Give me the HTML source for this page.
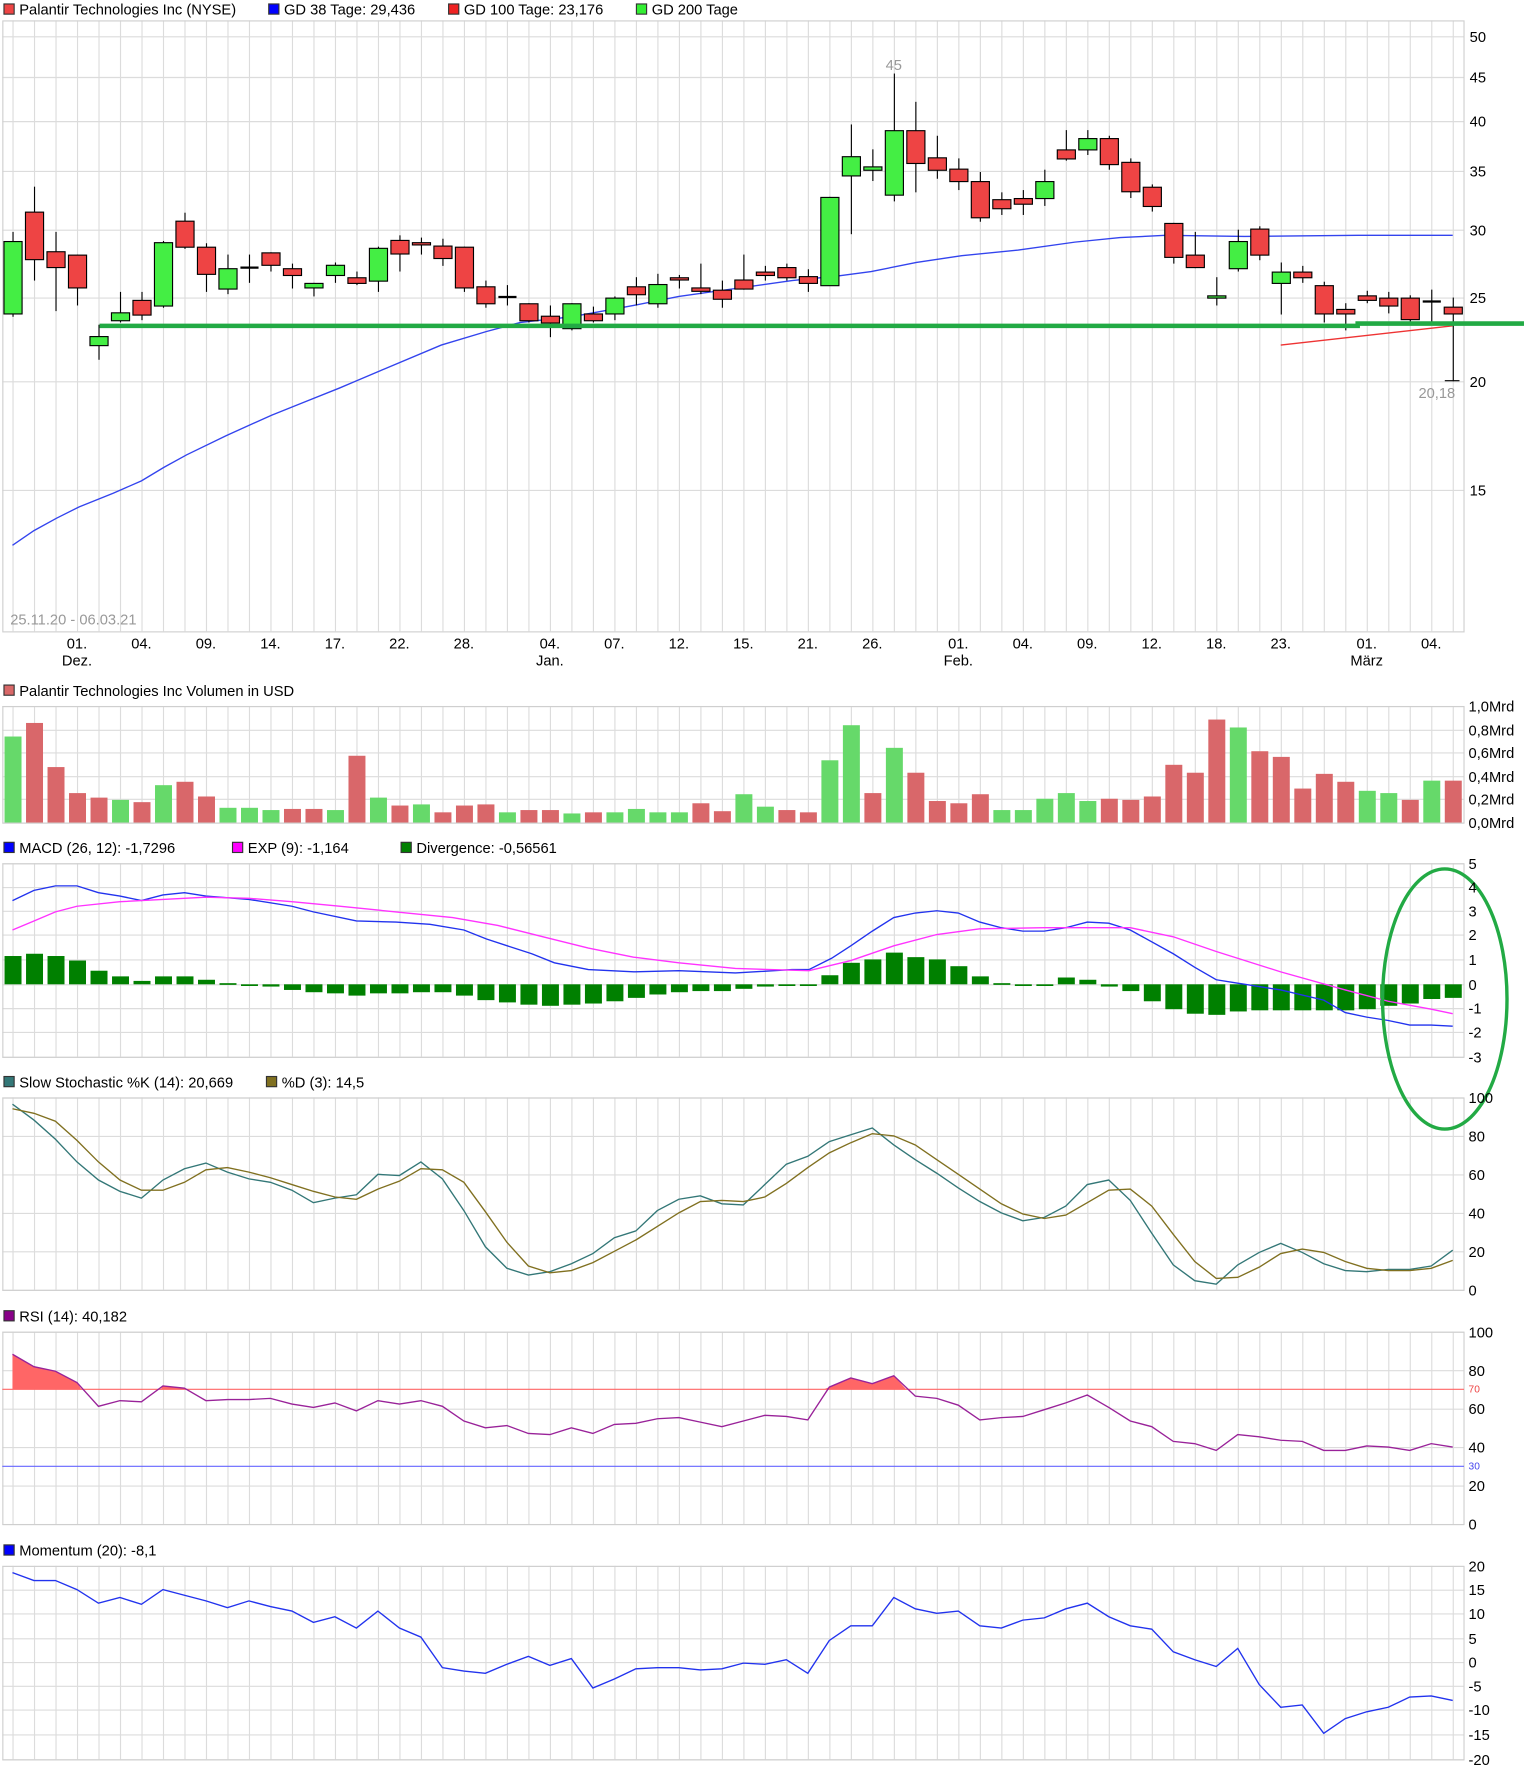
<!DOCTYPE html>
<html><head><meta charset="utf-8"><style>
html,body{margin:0;padding:0;background:#fff;}
svg{display:block;}
text{font-family:"Liberation Sans",Arial,sans-serif;font-size:13px;fill:#000;}
.g{fill:#999;}
</style></head><body>
<svg id="s" width="1524" height="1774" viewBox="0 0 1347 1568" xmlns="http://www.w3.org/2000/svg">
<rect width="1347" height="1568" fill="#fff"/>
<g id="grid" stroke="#dcdcdc" stroke-width="1"></g>
<g id="content"></g>
<!-- legends -->
<rect x="3.5" y="3.5" width="9" height="9" fill="#ee4444" stroke="#333"/><text x="17" y="13">Palantir Technologies Inc (NYSE)</text>
<rect x="237.5" y="3.5" width="9" height="9" fill="#0000ff" stroke="#333"/><text x="251" y="13">GD 38 Tage: 29,436</text>
<rect x="396.5" y="3.5" width="9" height="9" fill="#ee2222" stroke="#333"/><text x="410" y="13">GD 100 Tage: 23,176</text>
<rect x="562.5" y="3.5" width="9" height="9" fill="#33ee33" stroke="#333"/><text x="576" y="13">GD 200 Tage</text>
<rect x="3.5" y="605.5" width="9" height="9" fill="#d96868" stroke="#333"/><text x="17" y="615">Palantir Technologies Inc Volumen in USD</text>
<rect x="3.5" y="744.5" width="9" height="9" fill="#0000ff" stroke="#333"/><text x="17" y="754">MACD (26, 12): -1,7296</text>
<rect x="205.5" y="744.5" width="9" height="9" fill="#ff00ff" stroke="#333"/><text x="219" y="754">EXP (9): -1,164</text>
<rect x="354.5" y="744.5" width="9" height="9" fill="#008000" stroke="#333"/><text x="368" y="754">Divergence: -0,56561</text>
<rect x="3.5" y="951.5" width="9" height="9" fill="#337777" stroke="#333"/><text x="17" y="961">Slow Stochastic %K (14): 20,669</text>
<rect x="235.5" y="951.5" width="9" height="9" fill="#807020" stroke="#333"/><text x="249" y="961">%D (3): 14,5</text>
<rect x="3.5" y="1158.5" width="9" height="9" fill="#880088" stroke="#333"/><text x="17" y="1168">RSI (14): 40,182</text>
<rect x="3.5" y="1365.5" width="9" height="9" fill="#0000ff" stroke="#333"/><text x="17" y="1375">Momentum (20): -8,1</text>
<!-- price axis -->
<g>
<text x="1299" y="37">50</text><text x="1299" y="73">45</text><text x="1299" y="112">40</text><text x="1299" y="156">35</text><text x="1299" y="208">30</text><text x="1299" y="268">25</text><text x="1299" y="342">20</text><text x="1299" y="438">15</text>
<text x="790" y="62" class="g" text-anchor="middle">45</text>
<text x="1270" y="352" class="g" text-anchor="middle">20,18</text>
<text x="9" y="552" class="g">25.11.20 - 06.03.21</text>
</g>
<g text-anchor="middle">
<text x="68" y="573">01.</text><text x="68" y="588">Dez.</text>
<text x="125" y="573">04.</text><text x="182" y="573">09.</text><text x="239" y="573">14.</text><text x="296" y="573">17.</text><text x="353" y="573">22.</text><text x="410" y="573">28.</text>
<text x="486" y="573">04.</text><text x="486" y="588">Jan.</text>
<text x="543" y="573">07.</text><text x="600" y="573">12.</text><text x="657" y="573">15.</text><text x="714" y="573">21.</text><text x="771" y="573">26.</text>
<text x="847" y="573">01.</text><text x="847" y="588">Feb.</text>
<text x="904" y="573">04.</text><text x="961" y="573">09.</text><text x="1018" y="573">12.</text><text x="1075" y="573">18.</text><text x="1132" y="573">23.</text>
<text x="1208" y="573">01.</text><text x="1208" y="588">März</text>
<text x="1265" y="573">04.</text>
</g>
<g>
<text x="1298" y="629">1,0Mrd</text><text x="1298" y="650">0,8Mrd</text><text x="1298" y="670">0,6Mrd</text><text x="1298" y="691">0,4Mrd</text><text x="1298" y="711">0,2Mrd</text><text x="1298" y="732">0,0Mrd</text>
<text x="1298" y="768">5</text><text x="1298" y="789">4</text><text x="1298" y="810">3</text><text x="1298" y="831">2</text><text x="1298" y="853">1</text><text x="1298" y="875">0</text><text x="1298" y="896">-1</text><text x="1298" y="917">-2</text><text x="1298" y="939">-3</text>
<text x="1298" y="975">100</text><text x="1298" y="1009">80</text><text x="1298" y="1043">60</text><text x="1298" y="1077">40</text><text x="1298" y="1111">20</text><text x="1298" y="1145">0</text>
<text x="1298" y="1182">100</text><text x="1298" y="1216">80</text><text x="1298" y="1250">60</text><text x="1298" y="1284">40</text><text x="1298" y="1318">20</text><text x="1298" y="1352">0</text>
<text x="1298" y="1231" style="font-size:9px;fill:#ee4444">70</text><text x="1298" y="1299" style="font-size:9px;fill:#4444ee">30</text>
<text x="1298" y="1389">20</text><text x="1298" y="1410">15</text><text x="1298" y="1431">10</text><text x="1298" y="1453">5</text><text x="1298" y="1474">0</text><text x="1298" y="1495">-5</text><text x="1298" y="1516">-10</text><text x="1298" y="1538">-15</text><text x="1298" y="1560">-20</text>
</g>
</svg>
<script>
var NS="http://www.w3.org/2000/svg";
function el(p,t,a){var e=document.createElementNS(NS,t);for(var k in a)e.setAttribute(k,a[k]);p.appendChild(e);return e;}
var G=document.getElementById('grid'),C=document.getElementById('content');
var X=function(i){return 11+19*i;};
var panels=[[18,558,[32,68,107,151,203,263,337,433]],[624,727,[624,645,665,686,706,727]],[763,934,[763,784,805,826,848,870,891,912,934]],[970,1140,[970,1004,1038,1072,1106,1140]],[1177,1347,[1177,1211,1245,1279,1313,1347]],[1384,1555,[1384,1405,1426,1448,1469,1490,1511,1533,1555]]];
panels.forEach(function(p){
 for(var i=0;i<68;i++)el(G,'line',{x1:X(i)+.5,x2:X(i)+.5,y1:p[0],y2:p[1]});
 p[2].forEach(function(y){el(G,'line',{x1:2,x2:1294,y1:y+.5,y2:y+.5});});
 el(G,'rect',{x:2.5,y:p[0]+.5,width:1291.5,height:p[1]-p[0],fill:'none',stroke:'#cfcfcf'});
});
// candles: body top, body bottom, high, low, color (g/r/d)
var cd=[[213,277,205,280,'g'],[187,229,165,248,'r'],[222,236,205,275,'r'],[225,254,225,270,'r'],[297,305,287,318,'g'],[276,283,258,285,'g'],[265,278,258,283,'r'],[214,270,213,272,'g'],[195,218,188,220,'r'],[218,242,215,258,'r'],[237,255,225,260,'g'],[236,236,225,250,'d'],[223,234,223,240,'r'],[237,243,233,255,'r'],[250,254,250,262,'g'],[234,243,232,250,'g'],[245,250,240,252,'r'],[219,248,218,258,'g'],[212,224,208,240,'r'],[214,216,210,225,'r'],[217,228,211,235,'r'],[218,254,218,258,'r'],[253,268,248,272,'r'],[262,262,252,270,'d'],[268,283,268,285,'r'],[279,285,270,298,'r'],[268,290,268,292,'g'],[277,283,271,285,'r'],[263,277,262,283,'g'],[253,260,245,270,'r'],[251,268,242,272,'g'],[245,247,243,255,'r'],[254,257,233,260,'r'],[256,264,248,272,'r'],[247,255,225,256,'r'],[240,243,235,248,'r'],[236,245,233,248,'r'],[244,250,238,258,'r'],[174,252,174,252,'g'],[138,155,110,207,'g'],[147,150,132,160,'g'],[115,172,65,178,'g'],[115,144,90,170,'r'],[139,150,120,158,'r'],[149,160,140,168,'r'],[160,192,152,196,'r'],[176,184,170,190,'r'],[175,180,168,190,'r'],[160,175,150,182,'g'],[132,140,115,142,'r'],[122,132,115,137,'g'],[122,145,120,150,'r'],[143,169,140,175,'r'],[165,182,163,187,'r'],[197,227,197,233,'r'],[225,236,205,237,'r'],[261,263,245,270,'g'],[213,237,203,240,'g'],[202,225,200,230,'r'],[240,250,232,278,'g'],[240,245,235,250,'r'],[252,277,249,285,'r'],[273,277,268,292,'r'],[261,265,257,268,'r'],[263,270,258,277,'r'],[263,282,261,285,'r'],[266,266,256,287,'d'],[271,277,263,337,'r']];
function line(pts,col,w){el(C,'polyline',{points:pts.map(function(p){return p.join(',')}).join(' '),fill:'none',stroke:col,'stroke-width':w||1});}
// GD38
line([[11,482],[30,469],[50,458],[70,448],[100,436],[125,425],[145,413],[165,402],[200,385],[240,367],[270,355],[300,343],[340,326],[390,305],[430,293],[460,285],[505,280],[560,270],[600,262],[650,255],[700,248],[740,244],[770,240],[810,232],[850,226],[900,221],[950,214],[990,210],[1030,208],[1100,209],[1200,208],[1284,208]],'#3344ee',1.2);
line([[1132,305],[1284,288]],'#ee3333',1.2);
el(C,'rect',{x:1284,y:336.5,width:0,height:0});
cd.forEach(function(c,i){var x=X(i)+.5;
 el(C,'line',{x1:x,x2:x,y1:c[2],y2:c[3],stroke:'#000'});
 if(c[4]=='d'){el(C,'line',{x1:x-8,x2:x+8,y1:c[0]+.5,y2:c[0]+.5,stroke:'#000','stroke-width':2});}
 else el(C,'rect',{x:x-8,y:c[0]+.5,width:16,height:Math.max(2,c[1]-c[0]),fill:c[4]=='g'?'#44ee44':'#ee4444',stroke:'#000'});
});
el(C,'line',{x1:1277,x2:1290,y1:336.5,y2:336.5,stroke:'#000'});
el(C,'polyline',{points:'88,288 1200,288 1200,286 1347,286',fill:'none',stroke:'#22aa44','stroke-width':4});
// volume
var vol=[[651,'g'],[639,'r'],[678,'r'],[701,'r'],[705,'r'],[707,'g'],[709,'r'],[694,'g'],[691,'r'],[704,'r'],[714,'g'],[714,'g'],[716,'g'],[715,'r'],[715,'r'],[716,'g'],[668,'r'],[705,'g'],[712,'r'],[711,'g'],[718,'r'],[712,'r'],[711,'r'],[718,'g'],[716,'r'],[716,'r'],[719,'g'],[718,'r'],[718,'g'],[715,'g'],[718,'g'],[718,'g'],[710,'r'],[717,'r'],[702,'g'],[713,'g'],[716,'r'],[718,'r'],[672,'g'],[641,'g'],[701,'r'],[661,'g'],[683,'r'],[708,'r'],[710,'r'],[702,'r'],[716,'g'],[716,'g'],[706,'g'],[701,'g'],[708,'g'],[706,'r'],[707,'r'],[704,'r'],[676,'r'],[683,'r'],[636,'r'],[643,'g'],[664,'r'],[669,'r'],[697,'r'],[684,'r'],[691,'r'],[699,'g'],[701,'g'],[707,'r'],[690,'g'],[690,'r']];
vol.forEach(function(v,i){el(C,'rect',{x:X(i)-7,y:v[0],width:15,height:727-v[0],fill:v[1]=='g'?'#66d96a':'#d9676a'});});
// macd hist
var mh=[845,843,845,849,858,863,867,863,863,866,869,870,872,875,877,878,880,878,878,877,877,880,884,886,888,889,888,887,885,882,879,877,876,876,874,872,871,871,862,851,848,842,846,848,854,863,869,871,870,864,866,872,876,885,892,896,897,894,893,893,893,893,893,892,889,887,883,882];
mh.forEach(function(y,i){var t=Math.min(y,870),h=Math.max(1.5,Math.abs(y-870));el(C,'rect',{x:X(i)-7,y:t,width:15,height:h,fill:'#008000'});});
line([[11,796],[30,787],[49,783],[68,783],[87,789],[106,792],[125,796],[144,791],[163,789],[182,792],[220,795],[258,801],[277,806],[315,814],[350,815],[380,817],[410,822],[430,830],[470,843],[490,851],[520,857],[560,859],[600,858],[650,860],[700,857],[715,857],[735,847],[752,836],[771,823],[790,811],[809,807],[828,805],[847,807],[866,815],[885,820],[904,823],[923,823],[942,820],[961,815],[980,816],[999,822],[1037,843],[1056,855],[1075,866],[1094,869],[1132,875],[1170,884],[1189,895],[1208,899],[1227,902],[1246,906],[1265,906],[1284,907]],'#2233ee',1.2);
line([[11,822],[30,814],[49,806],[68,801],[106,797],[144,795],[182,793],[220,794],[258,797],[300,801],[350,806],[400,811],[440,818],[480,828],[520,838],[560,846],[600,851],[650,856],[715,858],[752,849],[790,836],[828,826],[866,821],[923,820],[961,820],[999,820],[1037,828],[1075,841],[1132,859],[1189,875],[1227,885],[1265,892],[1284,896]],'#ff33ff',1.2);
el(C,'ellipse',{cx:1277,cy:883,rx:55,ry:115,fill:'none',stroke:'#22aa44','stroke-width':3});
// stochastic
function idx(a){return a.map(function(y,i){return [X(i),y];});}
line(idx([976,990,1007,1027,1043,1053,1059,1043,1033,1028,1036,1042,1045,1052,1063,1059,1056,1038,1039,1027,1042,1070,1102,1121,1127,1124,1117,1108,1094,1088,1070,1060,1057,1064,1065,1047,1029,1022,1009,1003,997,1012,1025,1037,1050,1062,1072,1079,1076,1066,1047,1043,1061,1090,1118,1132,1135,1118,1107,1099,1107,1117,1123,1124,1122,1122,1119,1105]),'#337777',1.2);
line(idx([980,984,991,1008,1027,1043,1052,1052,1045,1034,1032,1036,1041,1047,1053,1058,1060,1051,1044,1033,1034,1045,1071,1098,1119,1125,1123,1116,1106,1096,1084,1072,1062,1061,1062,1058,1046,1032,1019,1010,1002,1004,1012,1025,1038,1051,1064,1073,1077,1074,1063,1052,1051,1066,1091,1115,1130,1129,1120,1108,1104,1107,1115,1121,1123,1123,1121,1114]),'#807020',1.2);
// RSI
el(C,'line',{x1:2,x2:1294,y1:1228,y2:1228,stroke:'#ff6666'});
el(C,'line',{x1:2,x2:1294,y1:1296,y2:1296,stroke:'#6666ff'});
var rsi=[1197,1208,1212,1222,1243,1238,1239,1225,1227,1238,1237,1237,1236,1241,1244,1240,1247,1238,1241,1238,1243,1256,1262,1260,1267,1268,1262,1267,1259,1258,1254,1253,1257,1261,1256,1251,1252,1255,1226,1218,1223,1216,1234,1236,1242,1255,1253,1252,1246,1240,1233,1244,1256,1261,1274,1276,1282,1268,1270,1273,1274,1282,1282,1278,1279,1282,1276,1279];
el(C,'polygon',{points:'11,1228 11,1197 30,1208 49,1212 68,1222 72,1228',fill:'#ff6666'});
el(C,'polygon',{points:'142,1228 144,1225 163,1227 165,1228',fill:'#ff6666'});
el(C,'polygon',{points:'728,1228 733,1226 752,1218 771,1223 790,1216 801,1228',fill:'#ff6666'});
line(idx(rsi),'#992299',1.2);
// momentum
line(idx([1390,1397,1397,1405,1417,1412,1418,1405,1410,1415,1421,1415,1420,1424,1434,1429,1439,1424,1439,1447,1474,1477,1479,1471,1464,1472,1466,1492,1484,1475,1474,1474,1476,1475,1470,1471,1467,1479,1450,1437,1437,1412,1422,1426,1424,1437,1439,1432,1430,1422,1417,1429,1437,1440,1460,1467,1473,1457,1489,1509,1507,1532,1519,1513,1509,1500,1499,1503]),'#2233ee',1.2);
</script>
</body></html>
